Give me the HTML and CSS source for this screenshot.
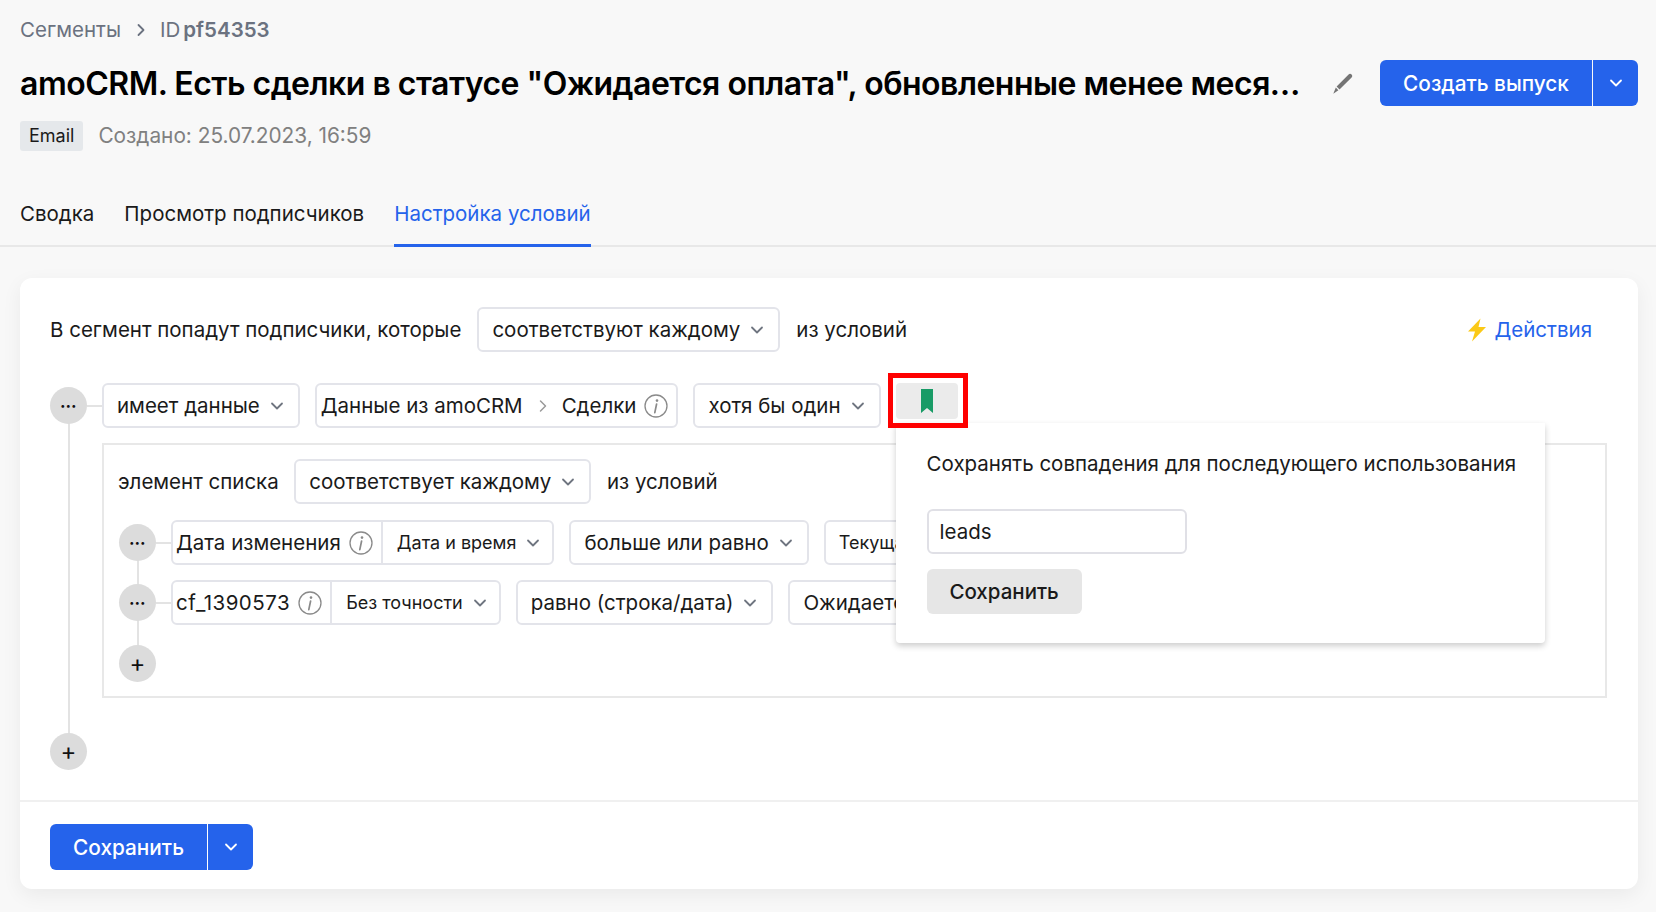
FILE: index.html
```html
<!DOCTYPE html>
<html lang="ru">
<head>
    <meta charset="UTF-8">
    <meta name="viewport" content="width=device-width, initial-scale=1.0">
    <title>Сегмент pf54353</title>
    <link rel="stylesheet" href="styles.css">
</head>
<body>
    <svg class="icon-defs" width="0" height="0" aria-hidden="true">
        <symbol id="chevron" viewBox="0 0 14 14"><path d="M2 4.5 7 9.5 12 4.5" fill="none" stroke="currentColor" stroke-width="1.8" stroke-linecap="round" stroke-linejoin="round"/></symbol>
        <symbol id="info" viewBox="0 0 24 24"><circle cx="12" cy="12" r="11" fill="none" stroke="currentColor" stroke-width="1.3"/><circle cx="13" cy="6.6" r="1.3" fill="currentColor"/><path d="M12.6 10 10.8 18.6" fill="none" stroke="currentColor" stroke-width="1.7" stroke-linecap="round"/></symbol>
    </svg>

    <header class="page-header">
        <nav class="crumbs">
            <span>Сегменты</span>
            <svg class="crumb-sep" viewBox="0 0 10 14"><path d="M2.5 2 7.5 7 2.5 12" fill="none" stroke="currentColor" stroke-width="1.8" stroke-linecap="round" stroke-linejoin="round"/></svg>
            <span class="crumb-id">ID</span><b>pf54353</b>
        </nav>

        <div class="title-row">
            <h1>amoCRM. Есть сделки в статусе "Ожидается оплата", обновленные менее месяца назад и не закрытые</h1>
            <svg class="edit-icon" viewBox="0 0 21 21"><path d="M15.6 1.4c.9-.9 2.2-.8 3 0s.9 2.200 0 3L6.500 16.500 3.600 13.400Z M2.800 14.600 5.400 17.300 0.300 20.800Z" fill="#757575"/></svg>
            <div class="split-btn">
                <button class="btn-main">Создать выпуск</button>
                <button class="btn-arrow"><svg class="chev"><use href="#chevron"/></svg></button>
            </div>
        </div>

        <div class="meta-row">
            <span class="tag">Email</span>
            <span class="created">Создано: 25.07.2023, 16:59</span>
        </div>

        <div class="tabs">
            <a>Сводка</a>
            <a>Просмотр подписчиков</a>
            <a class="active">Настройка условий</a>
        </div>
    </header>

    <main class="card">
        <div class="card-body">
            <div class="top-row">
                <span>В сегмент попадут подписчики, которые</span>
                <div class="select">соответствуют каждому <svg class="chev"><use href="#chevron"/></svg></div>
                <span>из условий</span>
                <a class="actions">
                    <svg class="bolt" viewBox="0 0 20 24"><path d="M13.500 0.500 1 13.500h7L5 23.500 19 9h-7.500Z" fill="#fbc916"/></svg>
                    Действия
                </a>
            </div>

            <div class="tree">
                <div class="cond-row">
                    <span class="dots">•••</span>
                    <div class="select">имеет данные <svg class="chev"><use href="#chevron"/></svg></div>
                    <div class="field">
                        Данные из amoCRM
                        <svg class="path-sep" viewBox="0 0 10 14"><path d="M2.500 2 7.500 7 2.500 12" fill="none" stroke="currentColor" stroke-width="1.500" stroke-linecap="round" stroke-linejoin="round"/></svg>
                        Сделки
                        <svg class="info"><use href="#info"/></svg>
                    </div>
                    <div class="select">хотя бы один <svg class="chev"><use href="#chevron"/></svg></div>

                    <div class="bookmark-wrap">
                        <button class="bookmark">
                            <svg viewBox="0 0 12 24" width="12" height="24"><path d="M0 0H12V24L6 19 0 24Z" fill="#189b66"/></svg>
                        </button>
                        <span class="red-box"></span>
                        <div class="popover">
                            <p>Сохранять совпадения для последующего использования</p>
                            <input class="pop-input" type="text" value="leads">
                            <button class="pop-save">Сохранить</button>
                        </div>
                    </div>
                </div>

                <div class="nested">
                    <div class="nested-head">
                        <span>элемент списка</span>
                        <div class="select">соответствует каждому <svg class="chev"><use href="#chevron"/></svg></div>
                        <span>из условий</span>
                    </div>
                    <div class="tree tree-inner">
                        <div class="cond-row">
                            <span class="dots">•••</span>
                            <div class="combo">
                                <div class="combo-name">Дата изменения <svg class="info"><use href="#info"/></svg></div>
                                <div class="combo-type">Дата и время <svg class="chev"><use href="#chevron"/></svg></div>
                            </div>
                            <div class="select">больше или равно <svg class="chev"><use href="#chevron"/></svg></div>
                            <div class="select select-small">Текущая дата</div>
                        </div>
                        <div class="cond-row">
                            <span class="dots">•••</span>
                            <div class="combo">
                                <div class="combo-name combo-id">cf_1390573 <svg class="info"><use href="#info"/></svg></div>
                                <div class="combo-type">Без точности <svg class="chev"><use href="#chevron"/></svg></div>
                            </div>
                            <div class="select">равно (строка/дата) <svg class="chev"><use href="#chevron"/></svg></div>
                            <div class="select">Ожидается оплата</div>
                        </div>
                        <span class="plus plus-inner">+</span>
                    </div>
                </div>

                <span class="plus plus-outer">+</span>
            </div>
        </div>

        <div class="card-foot">
            <div class="split-btn">
                <button class="btn-main">Сохранить</button>
                <button class="btn-arrow"><svg class="chev"><use href="#chevron"/></svg></button>
            </div>
        </div>
    </main>
</body>
</html>
```

FILE: styles.css
```css
/* General */
* {
    box-sizing: border-box;
}

html, body {
    height: 912px;
    overflow: hidden;
}

body {
    margin: 0;
    background: #f8f8f8;
    color: #1a1a1a;
    font-family: "Inter", "Liberation Sans", sans-serif;
    font-size: 20.5px;
    line-height: 30px;
}

.icon-defs {
    position: absolute;
}

.chev {
    width: 14px;
    height: 14px;
    color: #6f7580;
    flex: none;
}

.info {
    width: 24px;
    height: 24px;
    color: #8a8a8a;
    flex: none;
}

/* Header */
.page-header {
    padding-top: 15px;
}

.crumbs {
    display: flex;
    align-items: center;
    padding-left: 20px;
    color: #6b7280;
}

.crumb-sep {
    width: 10px;
    height: 14px;
    margin: 0 14px 0 15px;
}

.crumb-id {
    margin-right: 3px;
}

.crumbs b {
    font-weight: 600;
}

.title-row {
    display: flex;
    align-items: center;
    margin-top: 15px;
    padding: 0 18px 0 20px;
}

.title-row h1 {
    flex: 1;
    min-width: 0;
    margin: 0;
    font-size: 32px;
    line-height: 45px;
    font-weight: 600;
    letter-spacing: -0.5px;
    color: #000;
    white-space: nowrap;
    overflow: hidden;
    text-overflow: ellipsis;
}

.edit-icon {
    width: 21px;
    height: 21px;
    margin: 0 26px 0 28px;
    flex: none;
}

.split-btn {
    display: flex;
    height: 46px;
    flex: none;
}

.split-btn button {
    border: none;
    background: #2563eb;
    color: #fff;
    font: 500 20.8px "Inter", sans-serif;
}

.btn-main {
    width: 212px;
    border-radius: 6px 0 0 6px;
}

.btn-arrow {
    width: 45px;
    margin-left: 1px;
    border-radius: 0 6px 6px 0;
    display: flex;
    align-items: center;
    justify-content: center;
}

.btn-arrow .chev {
    color: #fff;
}

.meta-row {
    display: flex;
    align-items: center;
    gap: 15px;
    margin-top: 15px;
    padding-left: 20px;
}

.tag {
    height: 30px;
    padding: 0 9px;
    background: #e5e8eb;
    border-radius: 3px;
    font-size: 18px;
}

.created {
    color: #808080;
    font-size: 20.8px;
}

/* Tabs */
.tabs {
    display: flex;
    gap: 30px;
    margin-top: 33px;
    padding-left: 20px;
    height: 63px;
    border-bottom: 2px solid #e8e8e8;
}

.tabs a {
    height: 63px;
    padding-top: 15px;
    color: #1a1a1a;
}

.tabs a.active {
    color: #2563eb;
    border-bottom: 3px solid #2563eb;
}

/* Card */
.card {
    margin: 31px 18px 0 20px;
    height: 611px;
    background: #fff;
    border-radius: 12px;
    box-shadow: 0 6px 20px rgba(0, 0, 0, 0.06);
}

.card-body {
    padding: 29px 31px 30px 30px;
}

.top-row {
    display: flex;
    align-items: center;
    gap: 16px;
}

.select {
    display: flex;
    align-items: center;
    justify-content: space-between;
    gap: 10px;
    height: 45px;
    padding: 0 14px 0 13px;
    flex: none;
    background: #fff;
    border: 2px solid #e3e4ea;
    border-radius: 6px;
    white-space: nowrap;
}

.actions {
    display: flex;
    align-items: center;
    gap: 7px;
    margin-left: auto;
    margin-right: 15px;
    color: #2563eb;
}

.bolt {
    width: 20px;
    height: 24px;
}

/* Condition tree */
.tree {
    position: relative;
    margin-top: 31px;
}

.tree::before {
    content: "";
    position: absolute;
    left: 18px;
    top: 22px;
    bottom: 20px;
    width: 2px;
    background: #e3e3e3;
}

.cond-row {
    position: relative;
    display: flex;
    align-items: center;
    gap: 15px;
}

.dots,
.plus {
    position: relative;
    width: 37px;
    height: 37px;
    flex: none;
    display: flex;
    align-items: center;
    justify-content: center;
    background: #dcdcdc;
    border-radius: 50%;
    color: #111;
}

.dots {
    font-size: 9px;
    letter-spacing: 0.5px;
}

.dots::after {
    content: "";
    position: absolute;
    left: 37px;
    top: 18px;
    width: 15px;
    height: 2px;
    background: #e3e3e3;
}

.plus {
    font-size: 24px;
}

.plus-outer {
    margin-top: 35px;
}

.field {
    display: flex;
    align-items: center;
    height: 45px;
    padding: 0 8px 0 4px;
    background: #fff;
    border: 2px solid #e3e4ea;
    border-radius: 6px;
    white-space: nowrap;
}

.path-sep {
    width: 10px;
    height: 14px;
    margin: 0 14px 0 15px;
    color: #9a9a9a;
}

.field .info {
    margin-left: 8px;
}

/* Bookmark + popover */
.bookmark-wrap {
    position: relative;
    align-self: flex-start;
}

.bookmark {
    display: flex;
    align-items: center;
    justify-content: center;
    width: 62px;
    height: 36px;
    padding: 0;
    border: none;
    border-radius: 4px;
    background: #ebebeb;
}

.red-box {
    position: absolute;
    left: -8px;
    top: -10px;
    z-index: 3;
    width: 80px;
    height: 55px;
    border: 5px solid #fe0000;
}

.popover {
    position: absolute;
    left: 0;
    top: 40px;
    z-index: 2;
    width: 649px;
    height: 220px;
    padding: 26px 31px;
    background: #fff;
    border-radius: 0 0 4px 4px;
    box-shadow: 0 3px 6px rgba(0, 0, 0, 0.2);
}

.popover p {
    margin: 0 0 30px;
    white-space: nowrap;
}

.pop-input {
    display: block;
    width: 260px;
    height: 45px;
    padding: 0 11px;
    border: 2px solid #e0e0e6;
    border-radius: 6px;
    font: 20.5px "Inter", sans-serif;
    color: #1a1a1a;
}

.pop-save {
    display: block;
    width: 155px;
    height: 45px;
    margin-top: 15px;
    border: none;
    border-radius: 6px;
    background: #e6e6e6;
    font: 500 20.5px "Inter", sans-serif;
    color: #1a1a1a;
}

/* Nested group */
.nested {
    margin: 15px 0 0 52px;
    padding: 14px 14px 14px;
    border: 2px solid #e8e8e8;
}

.nested-head {
    display: flex;
    align-items: center;
    gap: 15.5px;
}

.tree-inner {
    margin: 16px 0 0 1px;
    display: flex;
    flex-direction: column;
    gap: 15px;
}

.combo {
    display: flex;
    height: 45px;
    border: 2px solid #e3e4ea;
    border-radius: 6px;
    flex: none;
}

.combo-name {
    display: flex;
    align-items: center;
    gap: 8px;
    padding: 0 8px 0 3px;
    border-right: 2px solid #e3e4ea;
    white-space: nowrap;
}

.combo-id {
    letter-spacing: 0.5px;
}

.combo-type {
    display: flex;
    align-items: center;
    gap: 10px;
    padding: 0 12px 0 14px;
    font-size: 18px;
    white-space: nowrap;
}

.select-small {
    font-size: 18px;
}

.plus-inner {
    margin-top: 5px;
}

/* Footer */
.card-foot {
    padding: 22px 30px 21px;
    border-top: 2px solid #f0f0f0;
}

.card-foot .btn-main {
    width: 157px;
}
```
